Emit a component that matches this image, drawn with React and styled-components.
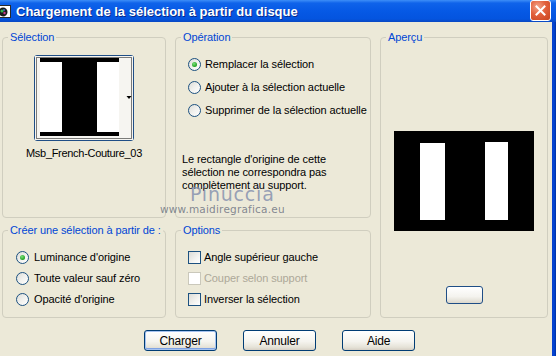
import React from "react";
import styled, { createGlobalStyle } from "styled-components";

const GlobalStyle = createGlobalStyle`
  html, body {
    margin: 0;
    padding: 0;
    background: #ECE9D8;
  }
  body {
    font-family: "Liberation Sans", Arial, sans-serif;
    font-size: 11px;
    color: #000;
  }
`

const Window = styled.div`
  width: 556px;
  height: 356px;
  display: flex;
  flex-direction: column;
  overflow: hidden;
  background: #ECE9D8;
`
const TitleBar = styled.div`
  height: 22px;
  flex: none;
  display: flex;
  align-items: center;
  background: linear-gradient(to bottom, #3D8EF8 0%, #0F63EA 14%, #0659E5 50%, #0454DF 86%, #0A48C2 100%);
`
const TitleText = styled.div`
  flex: 1;
  margin-left: 4px;
  color: #fff;
  font-family: "Liberation Sans", Arial, sans-serif;
  font-weight: bold;
  font-size: 13px;
  text-shadow: 1px 1px 0 #0A2A8A;
  white-space: nowrap;
`
const CloseButton = styled.div`
  width: 19px;
  height: 19px;
  margin-right: 5px;
  margin-top: -1px;
  border: 1px solid #fff;
  border-radius: 3px;
  background: radial-gradient(circle at 35% 30%, #F2A58A 0%, #E2603C 45%, #C8441E 100%);
  display: flex;
  align-items: center;
  justify-content: center;
`
const Frame = styled.div`
  flex: 1;
  display: flex;
  min-height: 0;
`
const Body = styled.div`
  flex: 1;
  display: flex;
  flex-direction: column;
  padding: 15px 0 0 2px;
`
const SideBorder = styled.div`
  width: 4px;
  flex: none;
  background: linear-gradient(to right, #0A3FC8, #0045D8 50%, #002F9E);
`
const Columns = styled.div`
  display: flex;
  gap: 9px;
`
const Column = styled.div`
  width: ${p => p.$w}px;
  display: flex;
  flex-direction: column;
  gap: 12px;
`
const Group = styled.div`
  position: relative;
  box-sizing: border-box;
  height: ${p => p.$h}px;
  border: 1px solid #D0CEBF;
  border-radius: 4px;
  padding: ${p => p.$pad || "0"};
  display: flex;
  flex-direction: column;
  align-items: ${p => p.$center ? "center" : "stretch"};
`
const Legend = styled.div`
  position: absolute;
  top: -8px;
  left: 5px;
  padding: 0 2px;
  background: #ECE9D8;
  color: #0046D5;
  font-size: 11px;
  letter-spacing: -0.1px;
  line-height: 14px;
  white-space: nowrap;
`
const ThumbButton = styled.div`
  width: 100px;
  height: 86px;
  box-sizing: border-box;
  border: 1px solid #1F4E86;
  border-radius: 3px;
  background: #F4F3EE;
  display: flex;
`
const ThumbLabel = styled.div`
  margin-top: 6px;
  line-height: 13px;
  font-size: 11px;
  letter-spacing: -0.3px;
  white-space: nowrap;
`
const OptionList = styled.div`
  display: flex;
  flex-direction: column;
  gap: ${p => p.$gap}px;
`
const OptionRow = styled.div`
  display: flex;
  align-items: center;
  height: 13px;
  gap: ${p => p.$gap || 4}px;
  color: ${p => p.$disabled ? "#ACA899" : "#000"};
  white-space: nowrap;
`
const OptionText = styled.span`
  font-size: 11px;
  letter-spacing: -0.1px;
  line-height: 13px;
`
const RadioCircle = styled.span`
  width: 13px;
  height: 13px;
  box-sizing: border-box;
  flex: none;
  border: 1px solid #1C5180;
  border-radius: 50%;
  background: linear-gradient(135deg, #DCDCD7 0%, #F1F1EE 50%, #FFFFFF 100%);
  display: flex;
  align-items: center;
  justify-content: center;
  &::after {
    content: "";
    display: ${p => p.$checked ? "block" : "none"};
    width: 5px;
    height: 5px;
    border-radius: 50%;
    background: radial-gradient(circle at 40% 35%, #7BE07B, #21A121 70%);
  }
`
const CheckBox = styled.span`
  width: 13px;
  height: 13px;
  box-sizing: border-box;
  flex: none;
  border: 1px solid ${p => p.$disabled ? "#CAC8BB" : "#1C5180"};
  background: ${p => p.$disabled ? "#FFFFFF" : "linear-gradient(135deg, #DCDCD7 0%, #F3F3F0 60%, #FFFFFF 100%)"};
`
const Note = styled.p`
  margin: 36px 0 0 -6px;
  font-size: 11px;
  letter-spacing: -0.1px;
  line-height: 13px;
`
const Watermark = styled.div`
  position: absolute;
  left: -16px;
  top: 147px;
  pointer-events: none;
  display: flex;
  flex-direction: column;
  align-items: flex-start;
`
const WatermarkName = styled.span`
  margin-left: 30px;
  font-family: "DejaVu Sans", sans-serif;
  font-size: 19px;
  line-height: 18px;
  letter-spacing: 0.8px;
  color: rgba(128, 140, 172, 0.8);
`
const WatermarkUrl = styled.span`
  font-family: "DejaVu Sans", sans-serif;
  font-size: 10.5px;
  line-height: 13px;
  letter-spacing: 0.2px;
  color: rgba(110, 116, 130, 0.85);
`
const PreviewBox = styled.div`
  margin-top: 93px;
  display: flex;
  justify-content: center;
`
const SmallButton = styled.div`
  margin: 55px auto 0;
  width: 37px;
  height: 18px;
  box-sizing: border-box;
  border: 1px solid #1F4E86;
  border-radius: 3px;
  background: linear-gradient(to bottom, #FFFFFF 0%, #F4F3EE 60%, #DCD8CC 100%);
`
const ButtonRow = styled.div`
  display: flex;
  gap: 26px;
  margin-top: 12px;
  padding-left: 142px;
`
const Button = styled.div`
  width: 73px;
  height: 21px;
  box-sizing: border-box;
  border: 1px solid #003C74;
  border-radius: 3px;
  background: linear-gradient(to bottom, #FFFFFF 0%, #F5F4EF 55%, #E6E3D8 85%, #D6D0C5 100%);
  box-shadow: ${p => p.$primary ? "inset 0 0 0 1px #A6C3F0, inset 0 -1px 0 1px #7FA2E3" : "none"};
  display: flex;
  align-items: center;
  justify-content: center;
  font-size: 12px;
  letter-spacing: -0.2px;
`

const Thumb = () => (
  <svg width="98" height="84" viewBox="0 0 98 84">
    <rect x="0" y="0" width="98" height="84" fill="#F6F5F1" />
    <rect x="1.5" y="1.5" width="95" height="81" fill="none" stroke="#000" strokeDasharray="1 1" />
    <rect x="5" y="2" width="79" height="78" fill="#fff" />
    <rect x="5" y="2" width="79" height="4" fill="#000" />
    <rect x="5" y="76" width="79" height="4" fill="#000" />
    <rect x="27" y="2" width="35" height="78" fill="#000" />
    <path d="M91.5 40 L96.5 40 L94 43 Z" fill="#000" />
  </svg>
)

const Preview = () => (
  <svg width="140" height="100" viewBox="0 0 140 100">
    <rect width="140" height="100" fill="#000" />
    <rect x="26" y="12" width="25" height="77" fill="#fff" />
    <rect x="91" y="11" width="23" height="78" fill="#fff" />
  </svg>
)

const TitleIcon = () => (
  <svg width="14" height="16" viewBox="0 0 14 16" style={{ marginLeft: -2, flex: "none" }}>
    <rect x="0.5" y="2.5" width="12" height="12" fill="#fff" stroke="#2A2A2A" />
    <circle cx="5" cy="9" r="4.5" fill="#1A1A1A" />
    <circle cx="4" cy="8" r="1.6" fill="#38B24A" />
    <circle cx="6.5" cy="10" r="1.2" fill="#C83A8A" />
    <circle cx="6" cy="7" r="0.9" fill="#3A7BD8" />
  </svg>
)

const Radio = ({ checked, children, gap }) => (
  <OptionRow $gap={gap}>
    <RadioCircle $checked={checked} />
    <OptionText>{children}</OptionText>
  </OptionRow>
)

const Check = ({ disabled, children }) => (
  <OptionRow $disabled={disabled} $gap={3}>
    <CheckBox $disabled={disabled} />
    <OptionText>{children}</OptionText>
  </OptionRow>
)

const App = () => {
  return (
    <Window>
      <GlobalStyle />
      <TitleBar>
        <TitleIcon />
        <TitleText>Chargement de la sélection à partir du disque</TitleText>
        <CloseButton>
          <svg width="11" height="11" viewBox="0 0 11 11">
            <path d="M1.5 1.5 L9.5 9.5 M9.5 1.5 L1.5 9.5" stroke="#fff" strokeWidth="2" strokeLinecap="square" />
          </svg>
        </CloseButton>
      </TitleBar>
      <Frame>
        <Body>
          <Columns>
            <Column $w={164}>
              <Group $h={181} $pad="17px 0 0" $center>
                <Legend>Sélection</Legend>
                <ThumbButton>
                  <Thumb />
                </ThumbButton>
                <ThumbLabel>Msb_French-Couture_03</ThumbLabel>
              </Group>
              <Group $h={88} $pad="20px 0 0 13px">
                <Legend>Créer une sélection à partir de :</Legend>
                <OptionList $gap={8}>
                  <Radio checked gap={5}>Luminance d'origine</Radio>
                  <Radio gap={5}>Toute valeur sauf zéro</Radio>
                  <Radio gap={5}>Opacité d'origine</Radio>
                </OptionList>
              </Group>
            </Column>
            <Column $w={196}>
              <Group $h={181} $pad="20px 0 0 12px">
                <Legend>Opération</Legend>
                <OptionList $gap={10}>
                  <Radio checked>Remplacer la sélection</Radio>
                  <Radio>Ajouter à la sélection actuelle</Radio>
                  <Radio>Supprimer de la sélection actuelle</Radio>
                </OptionList>
                <Note>
                  Le rectangle d'origine de cette<br />
                  sélection ne correspondra pas<br />
                  complètement au support.
                </Note>
                <Watermark>
                  <WatermarkName>Pinuccia</WatermarkName>
                  <WatermarkUrl>www.maidiregrafica.eu</WatermarkUrl>
                </Watermark>
              </Group>
              <Group $h={88} $pad="20px 0 0 12px">
                <Legend>Options</Legend>
                <OptionList $gap={8}>
                  <Check>Angle supérieur gauche</Check>
                  <Check disabled>Couper selon support</Check>
                  <Check>Inverser la sélection</Check>
                </OptionList>
              </Group>
            </Column>
            <Column $w={168}>
              <Group $h={281}>
                <Legend>Aperçu</Legend>
                <PreviewBox>
                  <Preview />
                </PreviewBox>
                <SmallButton />
              </Group>
            </Column>
          </Columns>
          <ButtonRow>
            <Button $primary>Charger</Button>
            <Button>Annuler</Button>
            <Button>Aide</Button>
          </ButtonRow>
        </Body>
        <SideBorder />
      </Frame>
    </Window>
  )
}

export default App
